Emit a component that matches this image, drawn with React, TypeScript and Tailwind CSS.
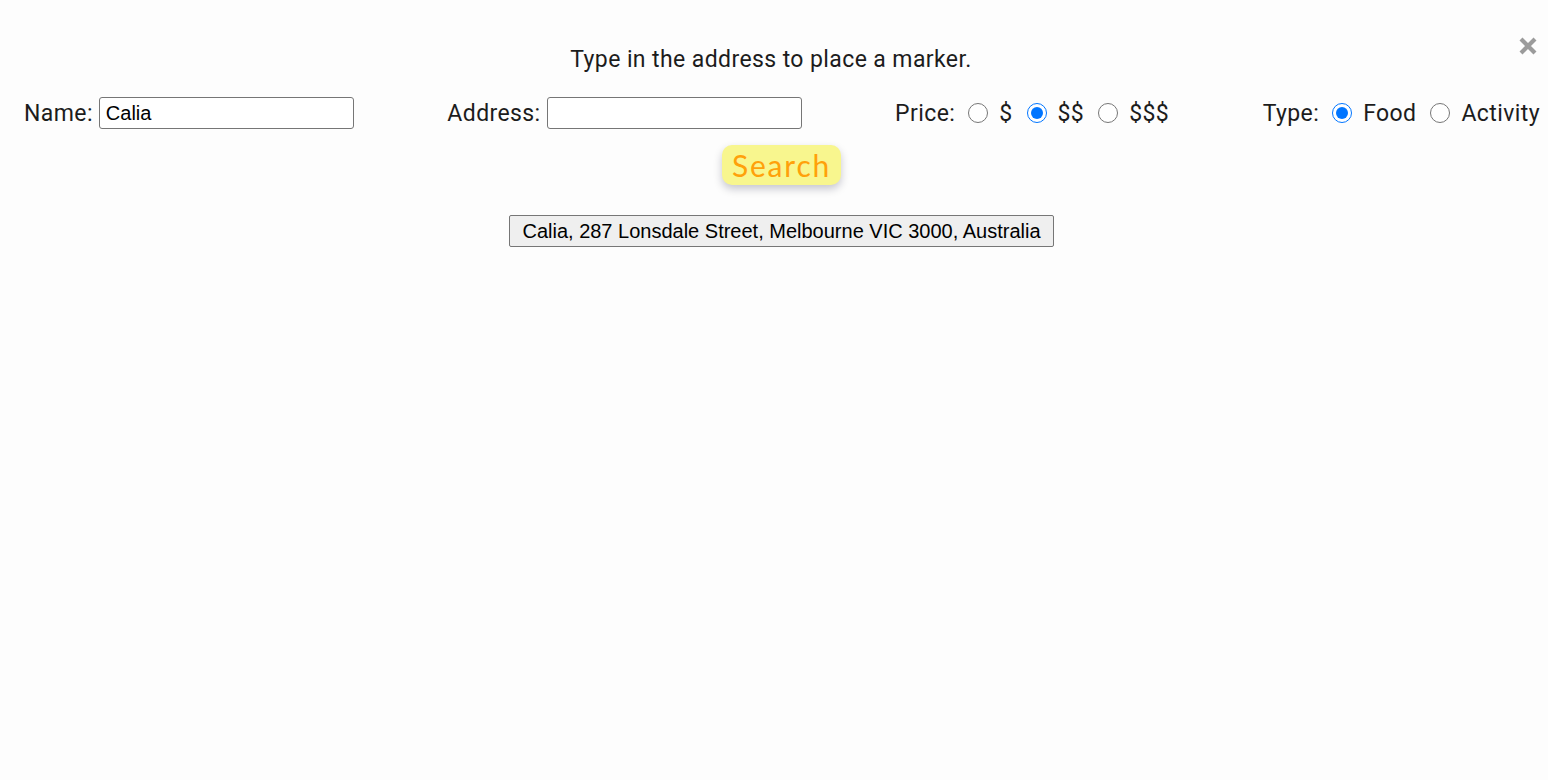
import React, { useState } from 'react'

const roboto = { fontFamily: 'Roboto, "Liberation Sans", sans-serif' }
const arial = { fontFamily: '"Liberation Sans", Arial, sans-serif' }

const App = () => {
  const [name, setName] = useState('Calia')
  const [address, setAddress] = useState('')
  const [price, setPrice] = useState('$$')
  const [kind, setKind] = useState('Food')

  return (
    <div className="relative min-h-screen w-full bg-[#fdfdfd] text-[#1c1c1c]" style={roboto}>
      <button className="absolute top-[36px] right-[10px] w-5 h-5 flex items-center justify-center" aria-label="close">
        <svg viewBox="0 0 20 20" className="w-5 h-5">
          <path d="M3 3 L17 17 M17 3 L3 17" stroke="#9b9b9b" strokeWidth="4.2" strokeLinecap="butt" />
        </svg>
      </button>

      <p className="pt-[48px] pr-[6px] text-center text-[23px] tracking-[0.4px] leading-6">Type in the address to place a marker.</p>

      <div className="mt-[25px] flex items-center justify-between pl-6 pr-2 h-8 text-[23px] tracking-[0.4px]">
        <label className="flex items-center gap-[6px]">
          <span className="pt-[2px]">Name:</span>
          <input
            value={name}
            onChange={(e) => setName(e.target.value)}
            className="w-[255px] h-8 border border-[#767676] rounded-[3px] bg-white px-[6px] text-[20px] tracking-normal text-black outline-none"
            style={arial}
          />
        </label>

        <label className="flex items-center gap-[6px]">
          <span className="pt-[2px]">Address:</span>
          <input
            value={address}
            onChange={(e) => setAddress(e.target.value)}
            className="w-[255px] h-8 border border-[#767676] rounded-[3px] bg-white px-[6px] text-[20px] tracking-normal text-black outline-none"
            style={arial}
          />
        </label>

        <div className="flex items-center">
          <span className="mr-[13px] pt-[2px]">Price:</span>
          {['$', '$$', '$$$'].map((p, i) => (
            <label key={p} className={`flex items-center ${i > 0 ? 'ml-[14px]' : ''}`}>
              <input
                type="radio"
                name="price"
                checked={price === p}
                onChange={() => setPrice(p)}
                className="w-5 h-5 m-0 accent-[#0075ff]"
              />
              <span className="ml-[11px] pt-[2px]">{p}</span>
            </label>
          ))}
        </div>

        <div className="flex items-center">
          <span className="mr-[13px] pt-[2px]">Type:</span>
          {['Food', 'Activity'].map((t, i) => (
            <label key={t} className={`flex items-center ${i > 0 ? 'ml-[14px]' : ''}`}>
              <input
                type="radio"
                name="kind"
                checked={kind === t}
                onChange={() => setKind(t)}
                className="w-5 h-5 m-0 accent-[#0075ff]"
              />
              <span className="ml-[11px] pt-[2px]">{t}</span>
            </label>
          ))}
        </div>
      </div>

      <div className="mt-4 flex justify-center pl-[15px]">
        <button
          className="h-10 w-[119px] rounded-[10px] bg-[#f8f68e] text-[#ffa10a] text-[30px] tracking-[1.8px] leading-none shadow-[0_4px_8px_rgba(0,0,40,0.22)]"
          style={{ fontFamily: 'Lato, sans-serif' }}
        >
          Search
        </button>
      </div>

      <div className="mt-[30px] flex justify-center pl-[15px]">
        <button
          className="h-8 px-[12px] border border-[#767676] rounded-[2px] bg-[#efefef] text-[20px] text-black"
          style={arial}
        >
          Calia, 287 Lonsdale Street, Melbourne VIC 3000, Australia
        </button>
      </div>
    </div>
  )
}

export default App
